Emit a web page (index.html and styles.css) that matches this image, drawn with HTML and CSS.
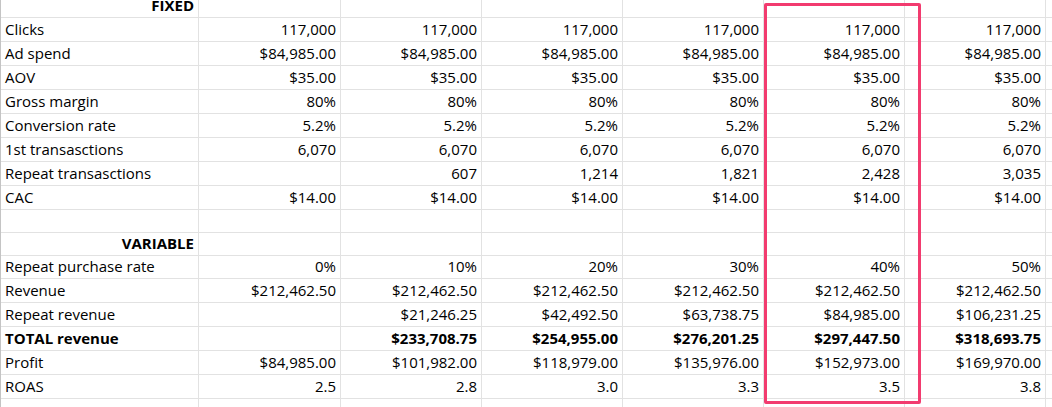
FILE: index.html
```html
<!DOCTYPE html>
<html>
<head>
<meta charset="utf-8">
<link rel="stylesheet" href="styles.css">
</head>
<body>
<div class="sheet">
  <div class="row h24 first"><div class="c lab head">FIXED</div><div class="c"></div><div class="c"></div><div class="c"></div><div class="c"></div><div class="c"></div><div class="c"></div><div class="c"></div></div>
  <div class="row h24"><div class="c lab">Clicks</div><div class="c">117,000</div><div class="c">117,000</div><div class="c">117,000</div><div class="c">117,000</div><div class="c">117,000</div><div class="c">117,000</div><div class="c"></div></div>
  <div class="row h24"><div class="c lab">Ad spend</div><div class="c">$84,985.00</div><div class="c">$84,985.00</div><div class="c">$84,985.00</div><div class="c">$84,985.00</div><div class="c">$84,985.00</div><div class="c">$84,985.00</div><div class="c"></div></div>
  <div class="row h24"><div class="c lab">AOV</div><div class="c">$35.00</div><div class="c">$35.00</div><div class="c">$35.00</div><div class="c">$35.00</div><div class="c">$35.00</div><div class="c">$35.00</div><div class="c"></div></div>
  <div class="row h24"><div class="c lab">Gross margin</div><div class="c">80%</div><div class="c">80%</div><div class="c">80%</div><div class="c">80%</div><div class="c">80%</div><div class="c">80%</div><div class="c"></div></div>
  <div class="row h24"><div class="c lab">Conversion rate</div><div class="c">5.2%</div><div class="c">5.2%</div><div class="c">5.2%</div><div class="c">5.2%</div><div class="c">5.2%</div><div class="c">5.2%</div><div class="c"></div></div>
  <div class="row h24"><div class="c lab">1st transasctions</div><div class="c">6,070</div><div class="c">6,070</div><div class="c">6,070</div><div class="c">6,070</div><div class="c">6,070</div><div class="c">6,070</div><div class="c"></div></div>
  <div class="row h24"><div class="c lab">Repeat transasctions</div><div class="c"></div><div class="c">607</div><div class="c">1,214</div><div class="c">1,821</div><div class="c">2,428</div><div class="c">3,035</div><div class="c"></div></div>
  <div class="row h24"><div class="c lab">CAC</div><div class="c">$14.00</div><div class="c">$14.00</div><div class="c">$14.00</div><div class="c">$14.00</div><div class="c">$14.00</div><div class="c">$14.00</div><div class="c"></div></div>
  <div class="row h23"><div class="c lab"></div><div class="c"></div><div class="c"></div><div class="c"></div><div class="c"></div><div class="c"></div><div class="c"></div><div class="c"></div></div>
  <div class="row h23"><div class="c lab head">VARIABLE</div><div class="c"></div><div class="c"></div><div class="c"></div><div class="c"></div><div class="c"></div><div class="c"></div><div class="c"></div></div>
  <div class="row h23"><div class="c lab">Repeat purchase rate</div><div class="c">0%</div><div class="c">10%</div><div class="c">20%</div><div class="c">30%</div><div class="c">40%</div><div class="c">50%</div><div class="c"></div></div>
  <div class="row h24"><div class="c lab">Revenue</div><div class="c">$212,462.50</div><div class="c">$212,462.50</div><div class="c">$212,462.50</div><div class="c">$212,462.50</div><div class="c">$212,462.50</div><div class="c">$212,462.50</div><div class="c"></div></div>
  <div class="row h24"><div class="c lab">Repeat revenue</div><div class="c"></div><div class="c">$21,246.25</div><div class="c">$42,492.50</div><div class="c">$63,738.75</div><div class="c">$84,985.00</div><div class="c">$106,231.25</div><div class="c"></div></div>
  <div class="row h24 bold"><div class="c lab">TOTAL revenue</div><div class="c"></div><div class="c">$233,708.75</div><div class="c">$254,955.00</div><div class="c">$276,201.25</div><div class="c">$297,447.50</div><div class="c">$318,693.75</div><div class="c"></div></div>
  <div class="row h24"><div class="c lab">Profit</div><div class="c">$84,985.00</div><div class="c">$101,982.00</div><div class="c">$118,979.00</div><div class="c">$135,976.00</div><div class="c">$152,973.00</div><div class="c">$169,970.00</div><div class="c"></div></div>
  <div class="row h24"><div class="c lab">ROAS</div><div class="c">2.5</div><div class="c">2.8</div><div class="c">3.0</div><div class="c">3.3</div><div class="c">3.5</div><div class="c">3.8</div><div class="c"></div></div>
  <div class="row h9"><div class="c lab"></div><div class="c"></div><div class="c"></div><div class="c"></div><div class="c"></div><div class="c"></div><div class="c"></div><div class="c"></div></div>
  <div class="highlight"></div>
</div>
</body>
</html>
```
FILE: styles.css
```css
html, body {
  margin: 0;
  padding: 0;
  background: #ffffff;
  overflow: hidden;
}
body {
  font-family: "Open Sans", "Noto Sans", sans-serif;
  font-size: 15px;
  color: #000000;
}
.sheet {
  position: relative;
  border-left: 1px solid #c4c4c4;
  width: 1051px;
}
.row {
  display: grid;
  grid-template-columns: 198px 142px 141px 141px 141px 141px 141px 6px;
}
.h24 { height: 24px; }
.h23 { height: 23px; }
.h9 { height: 9px; }
.row.first { height: 18px; }
.c {
  box-sizing: border-box;
  border-right: 1px solid #e2e2e2;
  border-bottom: 1px solid #e2e2e2;
  text-align: right;
  padding: 0 4px 0 4px;
  line-height: 23px;
  white-space: nowrap;
  overflow: hidden;
}
.h23 .c { line-height: 21px; }
.first .c { line-height: 17px; }
.h9 .c { border-bottom: none; }
.lab { text-align: left; }
.lab.head { text-align: right; font-weight: 700; }
.first .lab.head { line-height: 10px; overflow: visible; }
.bold .c { font-weight: 700; }
.highlight {
  position: absolute;
  left: 763px;
  top: 3px;
  width: 157px;
  height: 401px;
  box-sizing: border-box;
  border: 3px solid #f23b6f;
  border-radius: 2px;
}
```
